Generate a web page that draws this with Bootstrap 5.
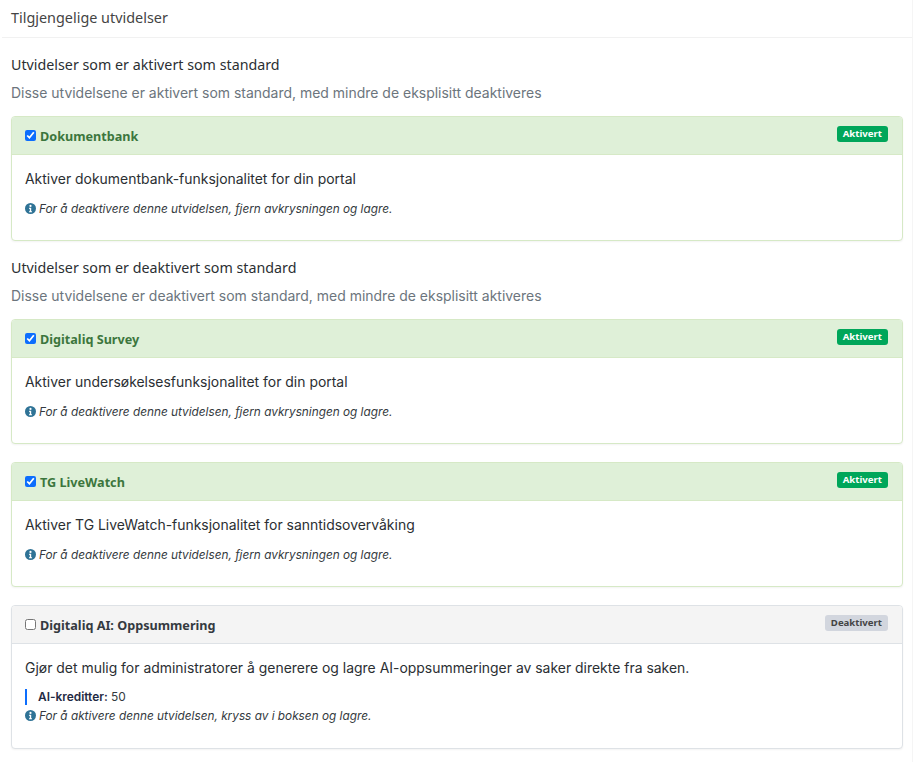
<!DOCTYPE html>
<html lang="no">
<head>
<meta charset="utf-8">
<title>Tilgjengelige utvidelser</title>
<link rel="stylesheet" href="https://cdn.jsdelivr.net/npm/bootstrap@5.3.0/dist/css/bootstrap.min.css">
<style>
html, body { height: 100%; }
body { background: #fff; color: #212529; font-family: Inter, sans-serif; font-size: 14px; }
.pg-wrap { width: 913px; min-height: 762px; background: #fff; border-right: 1px solid #f5f5f5; }
.pg-title { font-family: "Noto Sans", sans-serif; font-size: 14.4px; line-height: 20px; color: #444; padding: 8px 11px 9px 9px; border-bottom: 1px solid #f1f1f1; height: 38px; margin-left: 2px; }
.pg-main { padding: 17px 9px 0 11px; }
.sec-head { font-family: "Noto Sans", sans-serif; font-size: 14.27px; line-height: 20px; color: #2b2f33; margin: 0 0 8px; font-weight: 400; }
.sec-sub { font-size: 13.98px; line-height: 20px; color: #6c757d; margin: 0 0 13px; }
.ext-card { border-radius: 4px; margin-bottom: 18px; box-shadow: 0 1px 2px rgba(0,0,0,.05); }
.ext-card-first { margin-bottom: 17px; }
.ext-on { border: 1px solid #d6e9c6; }
.ext-off { border: 1px solid #dee2e6; }
.ext-head { height: 38px; padding: 0 14px 0 13px; border-radius: 3px 3px 0 0; }
.ext-on .ext-head { background: #dff0d8; border-bottom: 1px solid #d6e9c6; color: #3c763d; }
.ext-off .ext-head { background: #f4f4f4; border-bottom: 1px solid #dee2e6; color: #343a40; }
.ext-name { font-family: "Noto Sans", sans-serif; font-weight: 700; font-size: 12.65px; line-height: 20px; margin-left: 4px; }
.ext-check { width: 11px; height: 11px; margin: 0; accent-color: #0d6efd; }
.ext-pill { font-family: "Noto Sans", sans-serif; font-weight: 700; font-size: 9.6px; line-height: 12px; padding: 2px 6px; border-radius: 3px; margin-top: -3px; }
.pill-on { background: #00a65a; color: #fff; }
.pill-off { background: #d2d6de; color: #444; }
.ext-body { padding: 14px 13px 0; height: 85px; }
.ext-body-ai { height: 104px; }
.ext-desc { font-size: 13.95px; line-height: 20px; margin: 0 0 12px; color: #2b2f33; }
.ext-note { font-size: 11.8px; line-height: 16px; font-style: italic; color: #343a40; margin: 0; }
.ext-note svg { vertical-align: -1px; margin-right: 3px; }
.ext-credit { font-size: 11.9px; line-height: 16px; border-left: 2px solid #0d6efd; padding-left: 11px; margin: 0 0 3px; color: #343a40; }
.ext-credit b { font-weight: 600; color: #1f2a44; }
.ext-desc-ai { margin-bottom: 11px; }
</style>
</head>
<body>
<div class="pg-wrap">
  <div class="pg-title">Tilgjengelige utvidelser</div>
  <div class="pg-main">
    <h6 class="sec-head">Utvidelser som er aktivert som standard</h6>
    <p class="sec-sub">Disse utvidelsene er aktivert som standard, med mindre de eksplisitt deaktiveres</p>

    <div class="card ext-card ext-card-first ext-on">
      <div class="ext-head d-flex align-items-center justify-content-between">
        <label class="d-flex align-items-center"><input class="ext-check" type="checkbox" checked><span class="ext-name">Dokumentbank</span></label>
        <span class="ext-pill pill-on">Aktivert</span>
      </div>
      <div class="ext-body">
        <p class="ext-desc">Aktiver dokumentbank-funksjonalitet for din portal</p>
        <p class="ext-note"><svg width="11" height="11" viewBox="0 0 16 16"><circle cx="8" cy="8" r="8" fill="#2f7396"/><circle cx="8" cy="4.2" r="1.6" fill="#fff"/><path d="M6 7h3v5h1.2v1.6H5.8V12H7V8.6H6z" fill="#fff"/></svg>For å deaktivere denne utvidelsen, fjern avkrysningen og lagre.</p>
      </div>
    </div>

    <h6 class="sec-head">Utvidelser som er deaktivert som standard</h6>
    <p class="sec-sub">Disse utvidelsene er deaktivert som standard, med mindre de eksplisitt aktiveres</p>

    <div class="card ext-card ext-on">
      <div class="ext-head d-flex align-items-center justify-content-between">
        <label class="d-flex align-items-center"><input class="ext-check" type="checkbox" checked><span class="ext-name">Digitaliq Survey</span></label>
        <span class="ext-pill pill-on">Aktivert</span>
      </div>
      <div class="ext-body">
        <p class="ext-desc">Aktiver undersøkelsesfunksjonalitet for din portal</p>
        <p class="ext-note"><svg width="11" height="11" viewBox="0 0 16 16"><circle cx="8" cy="8" r="8" fill="#2f7396"/><circle cx="8" cy="4.2" r="1.6" fill="#fff"/><path d="M6 7h3v5h1.2v1.6H5.8V12H7V8.6H6z" fill="#fff"/></svg>For å deaktivere denne utvidelsen, fjern avkrysningen og lagre.</p>
      </div>
    </div>

    <div class="card ext-card ext-on">
      <div class="ext-head d-flex align-items-center justify-content-between">
        <label class="d-flex align-items-center"><input class="ext-check" type="checkbox" checked><span class="ext-name">TG LiveWatch</span></label>
        <span class="ext-pill pill-on">Aktivert</span>
      </div>
      <div class="ext-body">
        <p class="ext-desc">Aktiver TG LiveWatch-funksjonalitet for sanntidsovervåking</p>
        <p class="ext-note"><svg width="11" height="11" viewBox="0 0 16 16"><circle cx="8" cy="8" r="8" fill="#2f7396"/><circle cx="8" cy="4.2" r="1.6" fill="#fff"/><path d="M6 7h3v5h1.2v1.6H5.8V12H7V8.6H6z" fill="#fff"/></svg>For å deaktivere denne utvidelsen, fjern avkrysningen og lagre.</p>
      </div>
    </div>

    <div class="card ext-card ext-off">
      <div class="ext-head d-flex align-items-center justify-content-between">
        <label class="d-flex align-items-center"><input class="ext-check" type="checkbox"><span class="ext-name">Digitaliq AI: Oppsummering</span></label>
        <span class="ext-pill pill-off">Deaktivert</span>
      </div>
      <div class="ext-body ext-body-ai">
        <p class="ext-desc ext-desc-ai">Gjør det mulig for administratorer å generere og lagre AI-oppsummeringer av saker direkte fra saken.</p>
        <p class="ext-credit"><b>AI-kreditter:</b> 50</p>
        <p class="ext-note"><svg width="11" height="11" viewBox="0 0 16 16"><circle cx="8" cy="8" r="8" fill="#2f7396"/><circle cx="8" cy="4.2" r="1.6" fill="#fff"/><path d="M6 7h3v5h1.2v1.6H5.8V12H7V8.6H6z" fill="#fff"/></svg>For å aktivere denne utvidelsen, kryss av i boksen og lagre.</p>
      </div>
    </div>
  </div>
</div>
<script src="https://cdn.jsdelivr.net/npm/bootstrap@5.3.0/dist/js/bootstrap.bundle.min.js"></script>
</body>
</html>
